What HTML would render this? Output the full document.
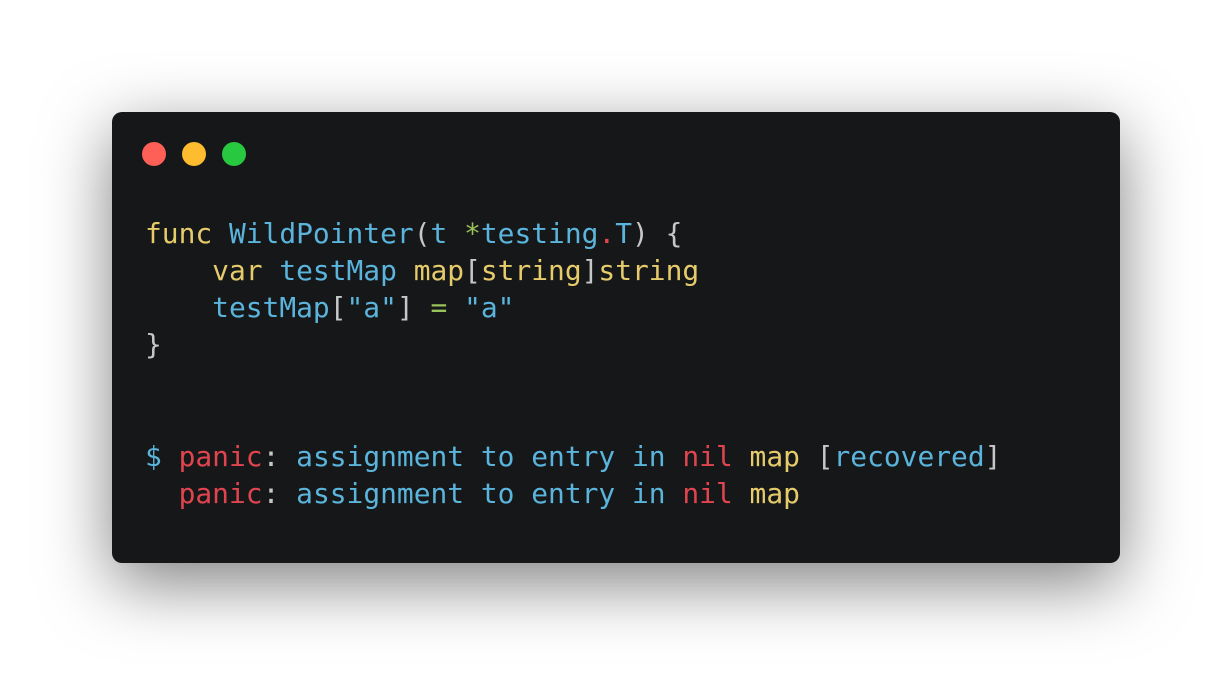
<!DOCTYPE html>
<html><head><style>
html,body{margin:0;padding:0;background:#fff;width:1232px;height:676px;overflow:hidden}
.win{position:absolute;left:112px;top:112px;width:1008px;height:451px;background:#161719;border-radius:10px;box-shadow:0 20px 68px rgba(0,0,0,0.5)}
.dot{position:absolute;top:30px;width:24px;height:24px;border-radius:50%}
pre{position:absolute;left:33px;top:103px;margin:0;font-family:"DejaVu Sans Mono","Liberation Mono",monospace;font-size:27.9px;line-height:37.15px;color:#c5c8c6}
.y{color:#e6cb6b}.b{color:#5ab4db}.g{color:#99c35a}.r{color:#e0454f}.w{color:#c5c8c6}
</style></head><body>
<div class="win">
<div class="dot" style="left:30px;background:#fe5f57"></div>
<div class="dot" style="left:70px;background:#febc2e"></div>
<div class="dot" style="left:110px;background:#28c840"></div>
<pre><span class="y">func</span> <span class="b">WildPointer</span><span class="w">(</span><span class="b">t</span> <span class="g">*</span><span class="b">testing</span><span class="r">.</span><span class="b">T</span><span class="w">) {</span>
    <span class="y">var</span> <span class="b">testMap</span> <span class="y">map</span><span class="w">[</span><span class="y">string</span><span class="w">]</span><span class="y">string</span>
    <span class="b">testMap</span><span class="w">[</span><span class="b">"a"</span><span class="w">]</span> <span class="g">=</span> <span class="b">"a"</span>
<span class="w">}</span>


<span class="b">$</span> <span class="r">panic</span><span class="w">:</span> <span class="b">assignment to entry in</span> <span class="r">nil</span> <span class="y">map</span> <span class="w">[</span><span class="b">recovered</span><span class="w">]</span>
  <span class="r">panic</span><span class="w">:</span> <span class="b">assignment to entry in</span> <span class="r">nil</span> <span class="y">map</span></pre>
</div>
</body></html>
